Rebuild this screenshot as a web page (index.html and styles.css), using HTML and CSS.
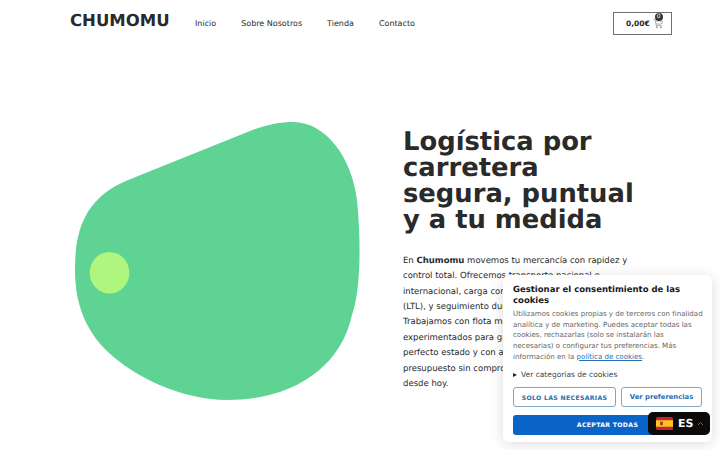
FILE: index.html
```html
<!DOCTYPE html>
<html lang="es">
<head>
<meta charset="utf-8">
<title>Chumomu</title>
<link rel="stylesheet" href="styles.css">
</head>
<body>
<div class="page">
  <header class="header">
    <a class="logo" href="#">CHUMOMU</a>
    <nav class="nav">
      <a href="#">Inicio</a>
      <a href="#">Sobre Nosotros</a>
      <a href="#">Tienda</a>
      <a href="#">Contacto</a>
    </nav>
    <a class="cart" href="#">
      <span>0,00€</span>
      <span class="cart-icon">
        <svg width="10" height="11" viewBox="0 0 10 11"><path d="M0.500 1.500H2L3.200 7.500H8.500M2.400 3H9.500L8.700 6H3" fill="none" stroke="#999" stroke-width="0.800"/><circle cx="3.800" cy="9.200" r="1" fill="#999"/><circle cx="7.800" cy="9.200" r="1" fill="#999"/></svg>
        <span class="cart-count">0</span>
      </span>
    </a>
  </header>
  <main class="hero">
    <svg class="blob" width="300" height="290" viewBox="70 118 300 290">
      <path d="M293 122C326 122 352 158 357 200C361 240 361 290 352 315C340 370 290 400 227 400C185 400 143 380 120 362C90 340 75 310 75 270C75 232 84 210 105 193C115 185 128 180 143 174L250 131C265 125 280 122 293 122Z" fill="#5fd394"/>
      <ellipse cx="109.500" cy="272.800" rx="19.800" ry="20.800" fill="#aef67e"/>
    </svg>
    <section class="copy">
      <h1>Logística por carretera segura, puntual y a tu medida</h1>
      <p>En <strong>Chumomu</strong> movemos tu mercancía con rapidez y control total. Ofrecemos transporte nacional e internacional, carga completa (FTL), fraccionada (LTL), y seguimiento durante todo el trayecto. Trabajamos con flota moderna y conductores experimentados para garantizar tu entrega en perfecto estado y con aviso a tiempo. Pide tu presupuesto sin compromiso y empieza a enviar desde hoy.</p>
    </section>
  </main>
</div>
<aside class="consent">
  <h2>Gestionar el consentimiento de las cookies</h2>
  <p>Utilizamos cookies propias y de terceros con finalidad analítica y de marketing. Puedes aceptar todas las cookies, rechazarlas (solo se instalarán las necesarias) o configurar tus preferencias. Más información en la <a href="#">política de cookies</a>.</p>
  <div class="cats"><span class="tri"></span>Ver categorías de cookies</div>
  <div class="btn-row">
    <button class="btn btn-out btn-upper btn-grow">SOLO LAS NECESARIAS</button>
    <button class="btn btn-out">Ver preferencias</button>
  </div>
  <button class="btn btn-fill btn-upper">ACEPTAR TODAS</button>
</aside>
<div class="lang">
  <svg width="17" height="13" viewBox="0 0 17 13"><rect width="17" height="13" rx="1.500" fill="#c8202c"/><rect y="3.250" width="17" height="6.500" fill="#f7c61e"/><rect x="4" y="4.600" width="3" height="3.600" fill="#b3421f"/></svg>
  <span class="lang-code">ES</span>
  <svg class="chev" width="7" height="5" viewBox="0 0 7 5"><path d="M1 4L3.500 1.500L6 4" fill="none" stroke="#666" stroke-width="1"/></svg>
</div>
</body>
</html>
```
FILE: styles.css
```css
* { box-sizing: border-box; }
html, body { margin: 0; padding: 0; height: 450px; overflow: hidden; background: #fff; }
body { font-family: "DejaVu Sans", sans-serif; color: #2a2a2a; position: relative; text-rendering: geometricPrecision; }
a { color: inherit; text-decoration: none; }
.page { padding: 0 48px 0 70px; }
.header { display: flex; align-items: center; height: 44px; }
.logo { font-size: 16.500px; font-weight: 700; width: 125px; margin-top: -3px; }
.nav { display: flex; gap: 25px; font-size: 8px; flex: 1; margin-top: 3px; }
.cart { display: flex; align-items: center; gap: 3px; width: 59px; height: 23px; border: 1px solid #6f6f6f; font-size: 7.500px; font-weight: 700; padding-left: 12px; margin-top: 2px; }
.cart-icon { position: relative; display: block; width: 10px; height: 11px; }
.cart-count { position: absolute; top: -5px; left: 2px; width: 8px; height: 8px; border-radius: 50%; background: #333; color: #fff; font-size: 6px; line-height: 8px; text-align: center; font-weight: 400; }
.hero { display: flex; padding-top: 75px; }
.blob { display: block; flex: none; margin-top: -1px; }
.hero .copy { margin-left: 33px; padding-top: 10px; width: 240px; }
h1 { margin: 0; font-size: 25.800px; line-height: 26px; font-weight: 700; }
.copy p { margin: 21px 0 0; width: 228px; font-size: 8.500px; line-height: 15.360px; }
.consent { position: absolute; left: 503px; top: 275px; width: 209px; height: 167px; background: #fff; border-radius: 6px; box-shadow: 0 2px 14px rgba(0,0,0,0.14); padding: 10px 10px 0 10px; }
.consent h2 { margin: 0; font-size: 8.500px; line-height: 10.600px; font-weight: 700; color: #18191c; }
.consent p { margin: 3px -1px 0 0; font-size: 7.050px; line-height: 10.600px; color: #666; }
.consent p a { color: #2a6fb0; text-decoration: underline; }
.cats { display: flex; align-items: center; margin-top: 8px; font-size: 7.500px; color: #444; }
.tri { width: 0; height: 0; border-left: 4px solid #222; border-top: 2.500px solid transparent; border-bottom: 2.500px solid transparent; margin-right: 4px; }
.btn-row { display: flex; gap: 5px; margin: 8px 0 5px; }
.btn { font-family: inherit; font-size: 6.800px; font-weight: 700; height: 20px; border-radius: 3px; padding: 0; cursor: pointer; }
.btn-upper { font-size: 6.200px; letter-spacing: 0.3px; }
.btn-out { width: 81px; background: #fff; color: #2a6fb0; border: 1px solid #7ea6c8; }
.btn-grow { width: 103px; }
.btn-fill { width: 189px; background: #0a64c8; color: #fff; border: 0; }
.lang { position: absolute; left: 648px; top: 412px; width: 62px; height: 23px; background: #0b0b0b; border-radius: 5px; display: flex; align-items: center; padding-left: 8px; gap: 5px; }
.lang-code { color: #fff; font-size: 11px; font-weight: 700; }
.chev { margin-left: -1px; }
```
